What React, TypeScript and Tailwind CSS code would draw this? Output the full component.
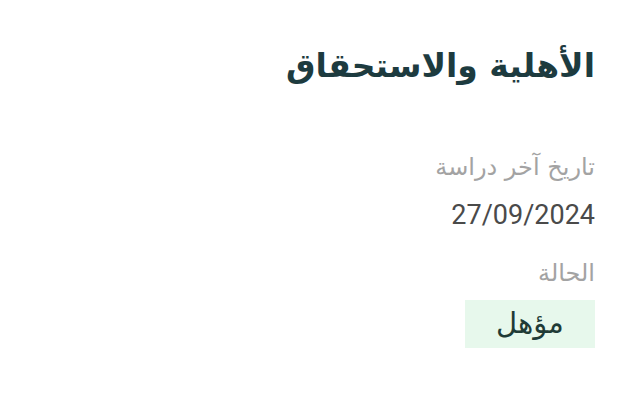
export default function App() {
  return (
    <div
      dir="rtl"
      className="h-[400px] w-[640px] bg-white pr-[45px] pt-[42px]"
      style={{ fontFamily: '"DejaVu Sans", "Noto Sans", sans-serif' }}
    >
      <h1 className="text-[33px] font-bold leading-[48px] text-[#1d3b3f]">الأهلية والاستحقاق</h1>

      <div className="mt-[61px] flex flex-col items-start">
        <div className="text-[24px] leading-[32px] text-[#a3a3a3]">تاريخ آخر دراسة</div>
        <div className="mt-[16px] text-[27px] leading-[32px] text-[#4a4a4a]" style={{ fontFamily: 'Roboto, "Noto Sans", sans-serif' }}>
          27/09/2024
        </div>

        <div className="mt-[26px] text-[24px] leading-[32px] text-[#a3a3a3]">الحالة</div>
        <div className="mt-[11px] flex h-[48px] w-[130px] items-center justify-center bg-[#e7f8ec] text-[29px] text-[#1f3b36]">
          مؤهل
        </div>
      </div>
    </div>
  );
}
